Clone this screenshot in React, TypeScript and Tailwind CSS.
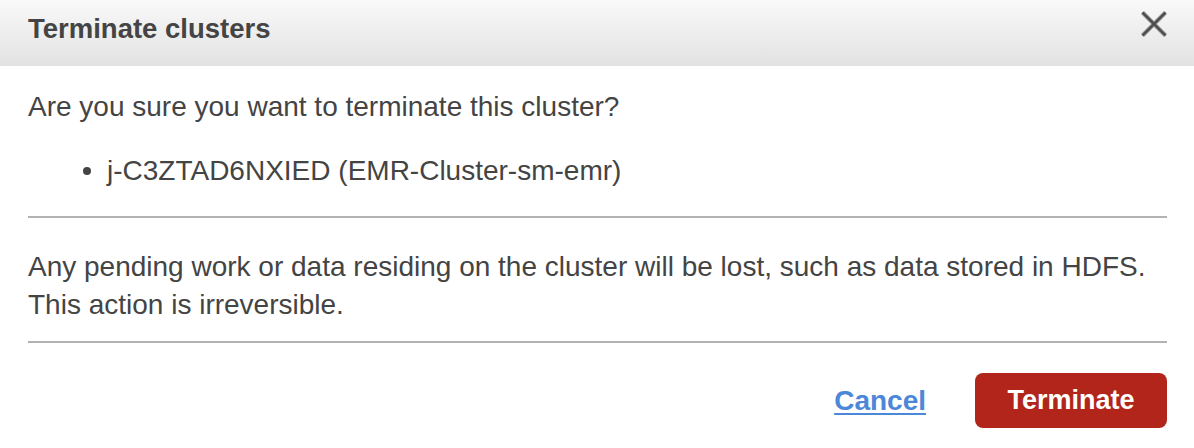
import React from 'react'

const font = { fontFamily: '"Liberation Sans", Arial, Helvetica, sans-serif' }

function CloseIcon() {
  return (
    <svg width="26" height="26" viewBox="0 0 26 26" className="block">
      <line x1="1.5" y1="1.5" x2="24.5" y2="24.5" stroke="#8a8a8a" strokeWidth="4" />
      <line x1="24.5" y1="1.5" x2="1.5" y2="24.5" stroke="#8a8a8a" strokeWidth="4" />
      <line x1="1.5" y1="1.5" x2="24.5" y2="24.5" stroke="#4a4a4a" strokeWidth="2" />
      <line x1="24.5" y1="1.5" x2="1.5" y2="24.5" stroke="#4a4a4a" strokeWidth="2" />
    </svg>
  )
}

export default function App() {
  const clusters = [{ id: 'j-C3ZTAD6NXIED', name: 'EMR-Cluster-sm-emr' }]

  return (
    <div className="w-[1194px] h-[448px] bg-white text-[#444]" style={font}>
      {/* Header */}
      <div className="h-[66px] flex items-start justify-between pl-[28px] pr-[27px] bg-gradient-to-b from-[#f9f9f9] to-[#e2e2e2]">
        <h2 className="pt-[13px] text-[27.5px] leading-[32px] font-bold text-[#444]">
          Terminate clusters
        </h2>
        <button className="mt-[11px]" title="Close">
          <CloseIcon />
        </button>
      </div>

      {/* Body */}
      <div className="px-[28px] pr-[27px]">
        <p className="mt-[25px] text-[28px] leading-[32px]">
          Are you sure you want to terminate this cluster?
        </p>
        <ul className="mt-[32px] pl-[55px]">
          {clusters.map((c) => (
            <li key={c.id} className="flex items-center gap-[16px] text-[28px] leading-[32px]">
              <span className="w-[8px] h-[8px] rounded-full bg-[#444] -mt-[1px]" />
              <span>
                {c.id} ({c.name})
              </span>
            </li>
          ))}
        </ul>

        <div className="mt-[29px] border-t-2 border-[#b3b3b3]" />

        <p className="mt-[30px] text-[28px] leading-[38px]">
          Any pending work or data residing on the cluster will be lost, such as data stored in HDFS.
          <br />
          This action is irreversible.
        </p>

        <div className="mt-[17px] border-t-2 border-[#b3b3b3]" />

        {/* Footer */}
        <div className="mt-[30px] flex items-center justify-end gap-[49px]">
          <a href="#" className="text-[28px] font-bold text-[#4d87d9] underline underline-offset-[3px] decoration-2">
            Cancel
          </a>
          <button className="w-[192px] h-[55px] rounded-[8px] bg-[#b1251b] text-white text-[27px] font-bold">
            Terminate
          </button>
        </div>
      </div>
    </div>
  )
}
